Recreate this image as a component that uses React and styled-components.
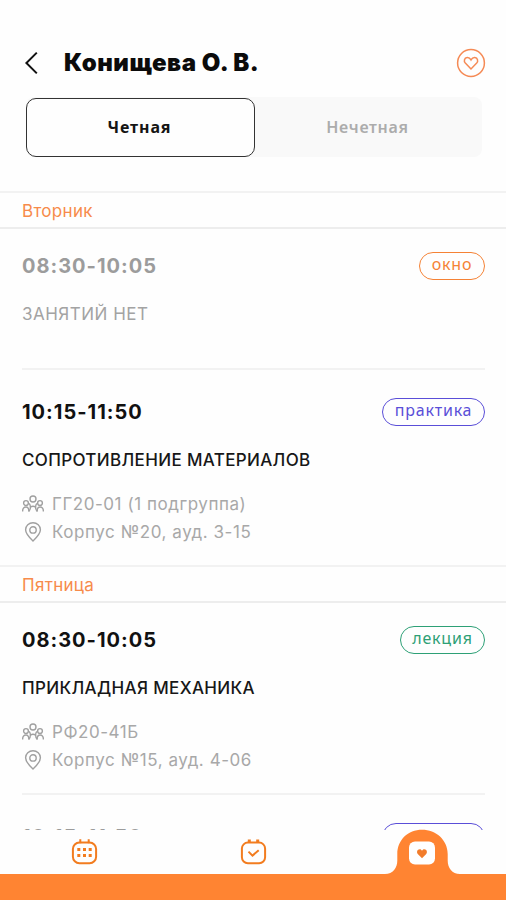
import styled, { createGlobalStyle } from 'styled-components';
import { useState } from 'react';

const DAYS = [
    {
        name: 'Вторник',
        lessons: [
            { id: 1, time: '08:30-10:05', title: 'ЗАНЯТИЙ НЕТ', type: 'окно', empty: true },
            {
                id: 2,
                time: '10:15-11:50',
                title: 'СОПРОТИВЛЕНИЕ МАТЕРИАЛОВ',
                type: 'практика',
                group: 'ГГ20-01 (1 подгруппа)',
                place: 'Корпус №20, ауд. 3-15',
            },
        ],
    },
    {
        name: 'Пятница',
        lessons: [
            {
                id: 3,
                time: '08:30-10:05',
                title: 'ПРИКЛАДНАЯ МЕХАНИКА',
                type: 'лекция',
                group: 'РФ20-41Б',
                place: 'Корпус №15, ауд. 4-06',
            },
            { id: 4, time: '10:15-11:50', type: 'практика', empty: true },
        ],
    },
];

const BADGE = {
    окно: { color: '#f58235', width: 66 },
    практика: { color: '#5a4ed8', width: 103 },
    лекция: { color: '#2da076', width: 85 },
};

const Lesson = ({ lesson }) => {
    const { time, title, type, empty, group, place } = lesson;
    return (
        <LessonBox $empty={empty}>
            <LessonTop>
                <Time $empty={empty}>{time}</Time>
                <Badge $color={BADGE[type].color} $width={BADGE[type].width}>
                    {type}
                </Badge>
            </LessonTop>
            {title && <Subject $empty={empty}>{title}</Subject>}
            {group && (
                <Meta>
                    <GroupIcon />
                    {group}
                </Meta>
            )}
            {place && (
                <Meta>
                    <PinIcon />
                    {place}
                </Meta>
            )}
        </LessonBox>
    );
};

const GroupIcon = () => (
    <Icon width="22" height="20" viewBox="0 0 22 20">
        <circle cx="11" cy="5" r="3" />
        <circle cx="4" cy="9" r="2.4" />
        <circle cx="18" cy="9" r="2.4" />
        <path d="M6.6 17.4c1.4-1 1.8-2.4 1.8-4.4 0-1.8-.6-2.8-1.2-3.6M15.4 17.4c-1.4-1-1.8-2.4-1.8-4.4 0-1.8.6-2.8 1.2-3.6M8.4 13.2c1.5-1.2 3.7-1.2 5.2 0" />
        <path d="M.6 17.4c0-2.8 1.2-4.4 3.4-4.4 1.8 0 2.9 1.6 2.9 4.4M21.4 17.4c0-2.8-1.2-4.4-3.4-4.4-1.8 0-2.9 1.6-2.9 4.4" />
    </Icon>
);

const PinIcon = () => (
    <Icon width="22" height="20" viewBox="0 0 22 20">
        <path d="M11 19C7.8 16 3.6 12 3.6 7.8a7.4 7 0 0 1 14.8 0C18.4 12 14.2 16 11 19z" />
        <circle cx="11" cy="7.9" r="3.2" />
    </Icon>
);

const App = () => {
    const [week, setWeek] = useState('even');

    return (
        <Wrapper>
            <GlobalStyle />
            <Header>
                <svg width="14" height="24" viewBox="0 0 14 24" fill="none" stroke="#111" strokeWidth="2">
                    <path d="M12.8 1.6 2.4 12l10.4 10.4" />
                </svg>
                <Name>Конищева О. В.</Name>
                <svg width="30" height="30" viewBox="0 0 30 30" fill="none" stroke="#f58a55" strokeWidth="1.5">
                    <circle cx="15" cy="15" r="13.4" />
                    <path d="M15 21 9.3 15.1C7.6 13.2 8.2 9.8 11.2 9.5c1.8-.1 3 1 3.8 2.4.8-1.4 2-2.5 3.8-2.4 3 .3 3.6 3.7 1.9 5.6z" />
                </svg>
            </Header>
            <Tabs>
                <Tab $active={week === 'even'} onClick={() => setWeek('even')}>
                    Четная
                </Tab>
                <Tab $active={week === 'odd'} onClick={() => setWeek('odd')}>
                    Нечетная
                </Tab>
            </Tabs>
            <Schedule>
                {DAYS.map((day) => (
                    <section key={day.name}>
                        <DayName>{day.name}</DayName>
                        {day.lessons.map((lesson) => (
                            <Lesson key={lesson.id} lesson={lesson} />
                        ))}
                    </section>
                ))}
            </Schedule>
            <BottomNav>
                <NavItem>
                    <svg width="28" height="28" viewBox="0 0 28 28" fill="none" stroke="#f27c1f" strokeWidth="2">
                        <rect x="2.9" y="4.6" width="23.2" height="20.6" rx="6.5" />
                        <path d="M10.3 1.2v4M18.7 1.2v4" />
                        <path
                            d="M7.3 11.6h3M13 11.6h3M18.7 11.6h3M7.3 17.6h3M13 17.6h3M18.7 17.6h3"
                            strokeWidth="3"
                        />
                    </svg>
                </NavItem>
                <NavItem>
                    <svg width="28" height="28" viewBox="0 0 28 28" fill="none" stroke="#f27c1f" strokeWidth="2">
                        <rect x="2.9" y="4.6" width="23.2" height="20.6" rx="6" />
                        <path d="M10.3 1.6v3M18.7 1.6v3" strokeWidth="3" />
                        <path d="m9.5 13.6 4 4 6.2-5.4" />
                    </svg>
                </NavItem>
                <NavItem>
                    <svg width="84" height="46" viewBox="0 0 84 46">
                        <path
                            d="M1 46v-1h4C13 45 17.3 39 17.3 31.5V25C17.3 11 28 .8 42 .8S67.7 11 67.7 25v6.5C67.7 39 72 45 80 45h3v1z"
                            fill="#ff8432"
                        />
                        <rect x="29" y="12.5" width="26" height="23" rx="6" fill="#fff" />
                        <path
                            d="m42 29.2-4-3.9c-1.8-1.8-.8-5 1.7-5 1.1 0 1.9.6 2.3 1.5.4-.9 1.2-1.5 2.3-1.5 2.5 0 3.5 3.2 1.7 5z"
                            fill="#f27c2b"
                        />
                    </svg>
                </NavItem>
                <NavBar />
            </BottomNav>
        </Wrapper>
    );
};

export default App;

const GlobalStyle = createGlobalStyle`
    * {
        box-sizing: border-box;
    }
    body {
        margin: 0;
        background: #fefefe;
        font-family: Inter, "Liberation Sans", sans-serif;
    }
`;

const Wrapper = styled.div`
    display: flex;
    flex-direction: column;
    width: 506px;
    height: 900px;
    overflow: hidden;
`;

const Header = styled.header`
    display: flex;
    align-items: center;
    height: 62px;
    margin-top: 32px;
    padding: 0 20px 0 24px;
`;

const Name = styled.h1`
    flex: 1;
    margin: 0 0 0 26px;
    padding-bottom: 1px;
    font-size: 24px;
    font-weight: 900;
    letter-spacing: 0.5px;
    color: #0b0b0b;
`;

const Tabs = styled.div`
    display: flex;
    height: 60px;
    margin: 3px 24px 34px 26px;
    background: #f9f9f9;
    border-radius: 8px;
`;

const Tab = styled.button`
    flex: 1;
    height: 59px;
    margin-top: 1px;
    padding: 0 2px 2px 0;
    border: ${({ $active }) => ($active ? '1.5px solid #333' : 'none')};
    border-radius: 10px;
    background: ${({ $active }) => ($active ? '#fefefe' : 'transparent')};
    color: ${({ $active }) => ($active ? '#151515' : '#acacac')};
    font-family: 'Noto Sans', sans-serif;
    font-size: 16px;
    font-weight: ${({ $active }) => ($active ? 700 : 600)};
    letter-spacing: ${({ $active }) => ($active ? 0.9 : 0.7)}px;
`;

const Schedule = styled.main`
    height: 639px;
    overflow: hidden;
`;

const DayName = styled.h2`
    height: 38px;
    margin: 0;
    padding-left: 22px;
    border-top: 2px solid #f2f2f2;
    border-bottom: 2px solid #ededed;
    font-size: 17px;
    font-weight: 400;
    line-height: 36px;
    letter-spacing: 0.3px;
    color: #f78b4b;
`;

const LessonBox = styled.article`
    height: ${({ $empty }) => ($empty ? 139 : 190)}px;
    margin: 0 21px 0 22px;
    padding-top: 22px;

    & + & {
        height: 197px;
        padding-top: 27px;
        border-top: 2px solid #f2f2f2;
    }
`;

const LessonTop = styled.div`
    display: flex;
    justify-content: space-between;
    align-items: center;
    height: 30px;
`;

const Time = styled.span`
    font-size: 20px;
    font-weight: 700;
    letter-spacing: 1px;
    color: ${({ $empty }) => ($empty ? '#9c9c9c' : '#111')};
`;

const Badge = styled.span`
    width: ${({ $width }) => $width}px;
    height: 28px;
    border: 1.5px solid ${({ $color }) => $color};
    border-radius: 14px;
    color: ${({ $color }) => $color};
    font-family: 'Noto Sans', sans-serif;
    font-size: 16px;
    line-height: 23px;
    letter-spacing: 0.8px;
    text-align: center;
`;

const Subject = styled.h3`
    margin: 22px 0 19px;
    font-size: 17px;
    font-weight: ${({ $empty }) => ($empty ? 400 : 500)};
    line-height: 22px;
    letter-spacing: ${({ $empty }) => ($empty ? 0.5 : 0.35)}px;
    color: ${({ $empty }) => ($empty ? '#a3a3a3' : '#171717')};
`;

const Meta = styled.div`
    display: flex;
    align-items: center;
    gap: 8px;
    height: 28px;
    font-size: 17px;
    letter-spacing: 0.55px;
    color: #a8a8a8;
`;

const Icon = styled.svg`
    flex: none;
    fill: none;
    stroke: #a0a0a0;
    stroke-width: 1.4;
`;

const BottomNav = styled.nav`
    display: grid;
    grid-template-columns: repeat(3, 1fr);
    grid-template-rows: 44px 26px;
    background: #fefefe;
`;

const NavItem = styled.div`
    display: flex;
    justify-content: center;
    align-items: center;
`;

const NavBar = styled.div`
    grid-column: 1 / -1;
    background: #ff8432;
`;
